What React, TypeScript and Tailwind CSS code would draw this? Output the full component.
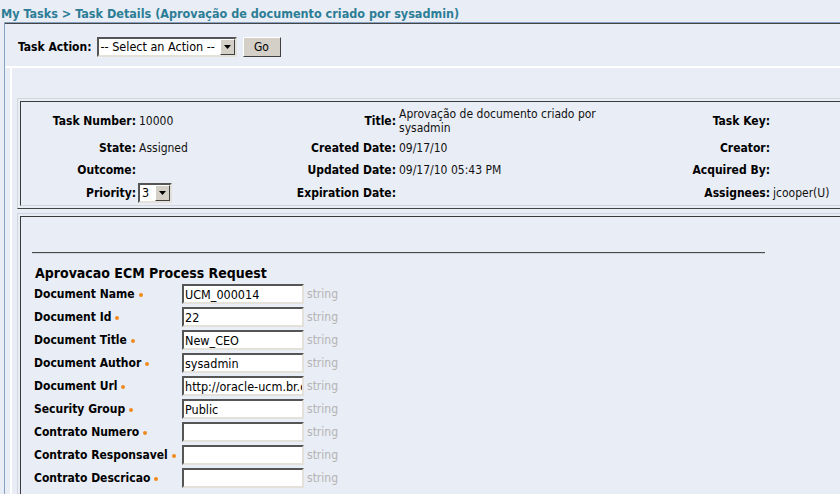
import React from 'react';

const font = { fontFamily: '"DejaVu Sans Condensed", "DejaVu Sans", "Liberation Sans", sans-serif' };

type Field = { label: string; value: string };

const fields: Field[] = [
  { label: 'Document Name', value: 'UCM_000014' },
  { label: 'Document Id', value: '22' },
  { label: 'Document Title', value: 'New_CEO' },
  { label: 'Document Author', value: 'sysadmin' },
  { label: 'Document Url', value: 'http://oracle-ucm.br.oracle.com' },
  { label: 'Security Group', value: 'Public' },
  { label: 'Contrato Numero', value: '' },
  { label: 'Contrato Responsavel', value: '' },
  { label: 'Contrato Descricao', value: '' },
];

function Arrow() {
  return (
    <span className="flex h-full w-[15px] shrink-0 items-center justify-center border border-t-white border-l-white border-b-[#404040] border-r-[#404040] bg-[#d4d0c8]">
      <svg width="7" height="4" viewBox="0 0 7 4">
        <path d="M0 0h7L3.5 4z" fill="#000" />
      </svg>
    </span>
  );
}

function FakeSelect({ text, width }: { text: string; width: string }) {
  return (
    <div
      className={`flex h-[20px] ${width} items-stretch border-2 border-t-[#555] border-l-[#555] border-b-[#e4e1da] border-r-[#e4e1da] bg-white`}
    >
      <span className="flex-1 overflow-hidden whitespace-nowrap pl-[2px] text-[12.5px] leading-[16px] text-black">{text}</span>
      <Arrow />
    </div>
  );
}

function Label({ children }: { children: React.ReactNode }) {
  return <div className="whitespace-nowrap text-right text-[12px] font-bold text-black">{children}</div>;
}

function Value({ children }: { children?: React.ReactNode }) {
  return <div className="whitespace-nowrap pl-[3px] text-[12px] leading-[14px] text-[#111]">{children}</div>;
}

export default function App() {
  return (
    <div className="h-[494px] w-[840px] overflow-hidden bg-[#e9edf5]" style={font}>
      {/* breadcrumb title */}
      <div className="h-[22px] whitespace-nowrap pl-[1px] pt-[6px] text-[12.5px] font-bold leading-[15px] text-[#2c7d95]">
        My Tasks &gt; Task Details (Aprovação de documento criado por sysadmin)
      </div>

      <div className="ml-[4px] w-[900px] border-t border-l border-[#86a2c2]">
        <div className="border-t border-[#444]">
          {/* task action bar */}
          <div className="flex h-[44px] items-center border-b-2 border-white pl-[13px] pt-[3px]">
            <span className="mr-[5px] text-[12px] font-bold text-black">Task Action:</span>
            <FakeSelect text="-- Select an Action --" width="w-[140px]" />
            <button className="ml-[6px] h-[20px] w-[38px] border border-t-white border-l-white border-b-[#404040] border-r-[#404040] bg-[#d4d0c8] text-[12px] leading-[16px] text-black">
              Go
            </button>
          </div>

          <div className="ml-[5px] border-l-2 border-white pl-[5px] pt-[30px]">
            {/* header info */}
            <div className="border border-t-[#d2d6dc] border-l-[#d2d6dc] border-b-[#444] border-r-[#444] p-[2px]">
              <div className="border border-t-[#3a3a3a] border-l-[#3a3a3a] border-b-[#d2d6dc] border-r-[#d2d6dc] pb-[1px] pt-[3px]">
                <div className="grid grid-cols-[115px_143px_117px_210px_164px_100px] grid-rows-[31px_23px_22px_23px] items-center">
                  <Label>Task Number:</Label>
                  <Value>10000</Value>
                  <Label>Title:</Label>
                  <Value>
                    Aprovação de documento criado por
                    <br />
                    sysadmin
                  </Value>
                  <Label>Task Key:</Label>
                  <Value />

                  <Label>State:</Label>
                  <Value>Assigned</Value>
                  <Label>Created Date:</Label>
                  <Value>09/17/10</Value>
                  <Label>Creator:</Label>
                  <Value />

                  <Label>Outcome:</Label>
                  <Value />
                  <Label>Updated Date:</Label>
                  <Value>09/17/10 05:43 PM</Value>
                  <Label>Acquired By:</Label>
                  <Value />

                  <Label>Priority:</Label>
                  <div className="pl-[2px]">
                    <FakeSelect text="3" width="w-[34px]" />
                  </div>
                  <Label>Expiration Date:</Label>
                  <Value />
                  <Label>Assignees:</Label>
                  <Value>jcooper(U)</Value>
                </div>
              </div>
            </div>

            {/* payload form */}
            <div className="mt-[4px] border border-t-[#d2d6dc] border-l-[#d2d6dc] border-b-[#444] border-r-[#444] p-[2px]">
              <div className="h-[300px] border border-t-[#3a3a3a] border-l-[#3a3a3a] border-b-[#d2d6dc] border-r-[#d2d6dc] pl-[11px] pt-[35px]">
                <div className="h-[2px] w-[733px] border-t border-b border-t-[#4a4a4a] border-b-[#cfd3da]" />
                <div className="pl-[3px] pt-[9px] text-[14px] font-bold leading-[20px] text-black">
                  Aprovacao ECM Process Request
                </div>
                <div className="mt-[1px] flex flex-col gap-[3px] pl-[2px]">
                  {fields.map((f) => (
                    <div key={f.label} className="flex h-[20px] items-center">
                      <div className="flex w-[148px] shrink-0 items-center text-[12px] font-bold text-black">
                        {f.label}
                        <span className="ml-[4px] mt-[2px] inline-block h-[4px] w-[4px] rounded-full bg-[#f28a1e]" />
                      </div>
                      <input
                        readOnly
                        value={f.value}
                        className="h-[20px] w-[122px] shrink-0 border-2 border-t-[#555] border-l-[#555] border-b-[#e4e1da] border-r-[#e4e1da] bg-white pl-[1px] text-[12.5px] leading-[16px] text-black outline-none"
                        style={font}
                      />
                      <span className="ml-[3px] text-[12px] text-[#b4b4b4]">string</span>
                    </div>
                  ))}
                </div>
              </div>
            </div>
          </div>
        </div>
      </div>
    </div>
  );
}
